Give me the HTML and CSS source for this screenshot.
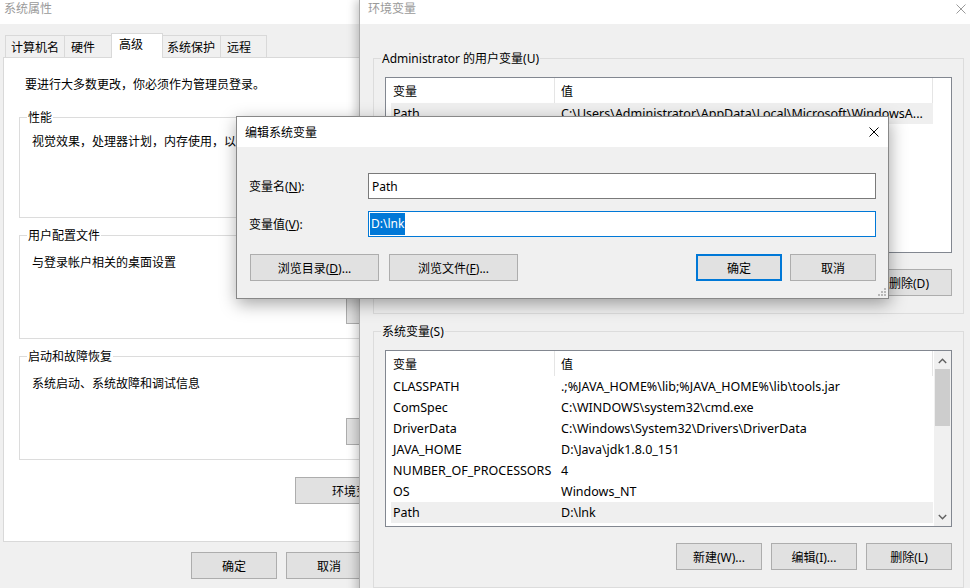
FILE: index.html
```html
<!DOCTYPE html>
<html lang="zh-CN">
<head>
    <meta charset="UTF-8">
    <meta name="viewport" content="width=device-width, initial-scale=1.0">
    <title>环境变量</title>
    <link rel="stylesheet" href="styles.css">
</head>
<body>
    <!-- 系统属性 -->
    <div class="win sysprops">
        <div class="titlebar">系统属性</div>
        <div class="tabs">
            <div class="tab t1">计算机名</div>
            <div class="tab t2">硬件</div>
            <div class="tab t3 active">高级</div>
            <div class="tab t4">系统保护</div>
            <div class="tab t5">远程</div>
        </div>
        <div class="panel">
            <p class="note">要进行大多数更改，你必须作为管理员登录。</p>
            <div class="group g-perf">
                <span class="group-label">性能</span>
                <div class="group-text">视觉效果，处理器计划，内存使用，以及虚拟内存</div>
                <button class="btn group-btn">设置(S)...</button>
            </div>
            <div class="group">
                <span class="group-label">用户配置文件</span>
                <div class="group-text">与登录帐户相关的桌面设置</div>
                <button class="btn group-btn">设置(E)...</button>
            </div>
            <div class="group">
                <span class="group-label">启动和故障恢复</span>
                <div class="group-text">系统启动、系统故障和调试信息</div>
                <button class="btn group-btn">设置(T)...</button>
            </div>
            <button class="btn env-btn">环境变量(N)...</button>
        </div>
        <div class="footer">
            <button class="btn">确定</button>
            <button class="btn">取消</button>
            <button class="btn">应用(A)</button>
        </div>
    </div>

    <!-- 环境变量 -->
    <div class="win envvars">
        <div class="titlebar">
            <span>环境变量</span>
            <svg class="close" width="10" height="10" viewBox="0 0 10 10"><path d="M0.5 0.5L9.5 9.5M9.5 0.5L0.5 9.5" stroke="#9a9a9a" stroke-width="1" fill="none"/></svg>
        </div>
        <div class="env-body">
            <div class="egroup">
                <span class="group-label">Administrator 的用户变量(U)</span>
                <div class="list">
                    <div class="list-head">
                        <div class="hcell c1">变量</div>
                        <div class="hcell c2">值</div>
                    </div>
                    <div class="row sel"><span class="c1">Path</span><span class="c2">C:\Users\Administrator\AppData\Local\Microsoft\WindowsA...</span></div>
                    <div class="row"><span class="c1">TEMP</span><span class="c2">%USERPROFILE%\AppData\Local\Temp</span></div>
                    <div class="row"><span class="c1">TMP</span><span class="c2">%USERPROFILE%\AppData\Local\Temp</span></div>
                </div>
                <div class="btn-row">
                    <button class="btn">新建(N)...</button>
                    <button class="btn">编辑(E)...</button>
                    <button class="btn">删除(D)</button>
                </div>
            </div>
            <div class="egroup">
                <span class="group-label">系统变量(S)</span>
                <div class="list">
                    <div class="list-head">
                        <div class="hcell c1">变量</div>
                        <div class="hcell c2">值</div>
                    </div>
                    <div class="row"><span class="c1">CLASSPATH</span><span class="c2">.;%JAVA_HOME%\lib;%JAVA_HOME%\lib\tools.jar</span></div>
                    <div class="row"><span class="c1">ComSpec</span><span class="c2">C:\WINDOWS\system32\cmd.exe</span></div>
                    <div class="row"><span class="c1">DriverData</span><span class="c2">C:\Windows\System32\Drivers\DriverData</span></div>
                    <div class="row"><span class="c1">JAVA_HOME</span><span class="c2">D:\Java\jdk1.8.0_151</span></div>
                    <div class="row"><span class="c1">NUMBER_OF_PROCESSORS</span><span class="c2">4</span></div>
                    <div class="row"><span class="c1">OS</span><span class="c2">Windows_NT</span></div>
                    <div class="row sel"><span class="c1">Path</span><span class="c2">D:\lnk</span></div>
                    <div class="scrollbar">
                        <svg class="arrow up" width="9" height="6" viewBox="0 0 9 6"><path d="M0.8 5L4.5 1.3L8.2 5" stroke="#606060" stroke-width="1.4" fill="none"/></svg>
                        <div class="thumb"></div>
                        <svg class="arrow down" width="9" height="6" viewBox="0 0 9 6"><path d="M0.8 1L4.5 4.7L8.2 1" stroke="#606060" stroke-width="1.4" fill="none"/></svg>
                    </div>
                </div>
                <div class="btn-row">
                    <button class="btn">新建(W)...</button>
                    <button class="btn">编辑(I)...</button>
                    <button class="btn">删除(L)</button>
                </div>
            </div>
        </div>
    </div>

    <!-- 编辑系统变量 -->
    <div class="dlg">
        <div class="dlg-title">
            <span>编辑系统变量</span>
            <svg class="close" width="10" height="10" viewBox="0 0 10 10"><path d="M0.5 0.5L9.5 9.5M9.5 0.5L0.5 9.5" stroke="#000" stroke-width="1" fill="none"/></svg>
        </div>
        <div class="dlg-body">
            <div class="field">
                <label>变量名(<u>N</u>):</label>
                <div class="input">Path</div>
            </div>
            <div class="field">
                <label>变量值(<u>V</u>):</label>
                <div class="input focus"><span class="selected">D:\lnk</span></div>
            </div>
            <div class="dlg-buttons">
                <button class="btn wide">浏览目录(<u>D</u>)...</button>
                <button class="btn wide">浏览文件(<u>F</u>)...</button>
                <button class="btn default push">确定</button>
                <button class="btn">取消</button>
            </div>
        </div>
        <svg class="grip" width="8" height="8" viewBox="0 0 8 8">
            <rect x="6" y="0" width="2" height="2" fill="#b8b8b8"/>
            <rect x="3" y="3" width="2" height="2" fill="#b8b8b8"/>
            <rect x="6" y="3" width="2" height="2" fill="#b8b8b8"/>
            <rect x="0" y="6" width="2" height="2" fill="#b8b8b8"/>
            <rect x="3" y="6" width="2" height="2" fill="#b8b8b8"/>
            <rect x="6" y="6" width="2" height="2" fill="#b8b8b8"/>
        </svg>
    </div>
</body>
</html>
```

FILE: styles.css
```css
* { box-sizing: border-box; }
body {
    margin: 0;
    width: 970px;
    height: 588px;
    overflow: hidden;
    position: relative;
    background: #f0f0f0;
    font-family: "Noto Sans", "Noto Sans CJK SC", sans-serif;
    font-size: 12px;
    color: #000;
}
.btn {
    font: inherit;
    color: #000;
    background: #e1e1e1;
    border: 1px solid #adadad;
    height: 27px;
    width: 86px;
    padding: 0;
    white-space: nowrap;
}
.win {
    position: absolute;
    top: 0;
    background: #f0f0f0;
}
.titlebar {
    height: 24px;
    background: #fff;
    padding-top: 1px;
    line-height: 16px;
    color: #9a9a9a;
}

/* 系统属性 */
.sysprops { left: 0; width: 470px; height: 600px; z-index: 1; }
.sysprops .titlebar { padding-left: 4px; }
.tabs {
    display: flex;
    align-items: flex-end;
    height: 33px;
    padding-left: 5px;
}
.tab {
    height: 22px;
    line-height: 23px;
    padding-left: 5px;
    border: 1px solid #d9d9d9;
    border-bottom: none;
    background: #f0f0f0;
    margin-left: -1px;
    position: relative;
}
.tab.t1 { margin-left: 0; width: 60px; }
.tab.t2 { width: 48px; padding-left: 6px; }
.tab.t3 { width: 52px; padding-left: 7px; }
.tab.t4 { width: 59px; padding-left: 4px; }
.tab.t5 { width: 47px; padding-left: 6px; }
.tab.active {
    height: 25px;
    line-height: 21px;
    background: #fff;
    margin-bottom: -1px;
    z-index: 2;
}
.panel {
    margin-left: 3px;
    width: 452px;
    height: 485px;
    background: #fff;
    border: 1px solid #d9d9d9;
    padding-left: 15px;
    display: flex;
    flex-direction: column;
    align-items: flex-start;
}
.note {
    margin: 0;
    padding: 18px 0 0 6px;
    line-height: 17px;
}
.group {
    position: relative;
    width: 412px;
    height: 104px;
    margin-top: 17px;
    border: 1px solid #dcdcdc;
    padding: 18px 5px 14px 12px;
    display: flex;
    flex-direction: column;
    align-items: flex-start;
}
.group.g-perf { margin-top: 24px; height: 101px; padding-top: 15px; }
.group-label {
    position: absolute;
    top: -8px;
    left: 7px;
    padding: 0 1px;
    line-height: 16px;
    background: #fff;
    white-space: nowrap;
}
.group-text { line-height: 17px; white-space: nowrap; }
.group-btn { margin-top: auto; margin-left: 314px; width: 75px; }
.env-btn { margin-top: 17px; margin-left: 276px; width: 148px; }
.footer {
    display: flex;
    gap: 9px;
    padding: 10px 0 0 191px;
}

/* 环境变量 */
.envvars {
    left: 359px;
    width: 620px;
    height: 600px;
    border-left: 1px solid #aaa;
    box-shadow: -3px 0 9px rgba(0, 0, 0, 0.22);
    z-index: 2;
}
.envvars .titlebar {
    display: flex;
    align-items: flex-start;
    padding-left: 8px;
}
.envvars .titlebar .close { margin: 3px 13px 0 auto; }
.env-body { padding: 34px 0 0 13px; }
.egroup {
    position: relative;
    width: 591px;
    border: 1px solid #dcdcdc;
    padding: 18px 0 17px 11px;
    margin-bottom: 17px;
}
.egroup .group-label { background: #f0f0f0; }
.list {
    position: relative;
    width: 567px;
    height: 176px;
    background: #fff;
    border: 1px solid #828790;
    overflow: hidden;
}
.egroup + .egroup .list { height: 177px; }
.list-head { display: flex; height: 25px; line-height: 27px; }
.hcell { border-right: 1px solid #e5e5e5; }
.hcell.c1 { width: 169px; padding-left: 7px; }
.hcell.c2 { width: 378px; padding-left: 6px; }
.row {
    display: flex;
    margin-left: 5px;
    width: 542px;
    height: 21px;
    line-height: 22px;
    font-size: 12.5px;
    white-space: nowrap;
}
.row.sel { background: #efefef; }
.row .c1 { width: 168px; padding-left: 2px; }
.row .c2 { padding-left: 2px; }
.scrollbar {
    position: absolute;
    top: 0;
    right: 0;
    bottom: 0;
    width: 17px;
    background: #f0f0f0;
    display: flex;
    flex-direction: column;
    align-items: center;
}
.arrow.up { margin-top: 7px; }
.thumb {
    margin-top: 5px;
    width: 15px;
    height: 57px;
    background: #cdcdcd;
}
.arrow.down { margin-top: auto; margin-bottom: 6px; }
.btn-row {
    display: flex;
    justify-content: flex-end;
    gap: 9px;
    width: 567px;
    margin-top: 16px;
}

/* 编辑系统变量 */
.dlg {
    position: absolute;
    left: 236px;
    top: 116px;
    width: 653px;
    height: 183px;
    background: #f0f0f0;
    border: 1px solid #888;
    box-shadow: 1px 5px 16px rgba(0, 0, 0, 0.35);
    z-index: 3;
}
.dlg-title {
    height: 30px;
    background: #fff;
    display: flex;
    align-items: center;
    padding-left: 8px;
}
.dlg-title .close { margin: 0 9px 0 auto; }
.dlg-body { padding: 26px 12px 0 12px; }
.field {
    display: flex;
    align-items: center;
    margin-bottom: 12px;
}
.field label { width: 119px; }
.input {
    width: 508px;
    height: 26px;
    background: #fff;
    border: 1px solid #7a7a7a;
    padding-left: 3px;
    display: flex;
    align-items: center;
}
.input.focus { border-color: #0078d7; padding-left: 1px; }
.selected {
    background: #0078d7;
    color: #fff;
    line-height: 22px;
    padding: 0 1px;
}
.dlg-buttons {
    display: flex;
    gap: 8px;
    margin-top: 17px;
}
.dlg-buttons .wide { width: 129px; margin-right: 2px; }
.dlg-buttons .wide:first-child { margin-left: 1px; }
.push { margin-left: auto; }
.btn.default {
    border-color: #0078d7;
    box-shadow: inset 0 0 0 1px #0078d7;
}
.grip { position: absolute; right: 2px; bottom: 2px; }
```
